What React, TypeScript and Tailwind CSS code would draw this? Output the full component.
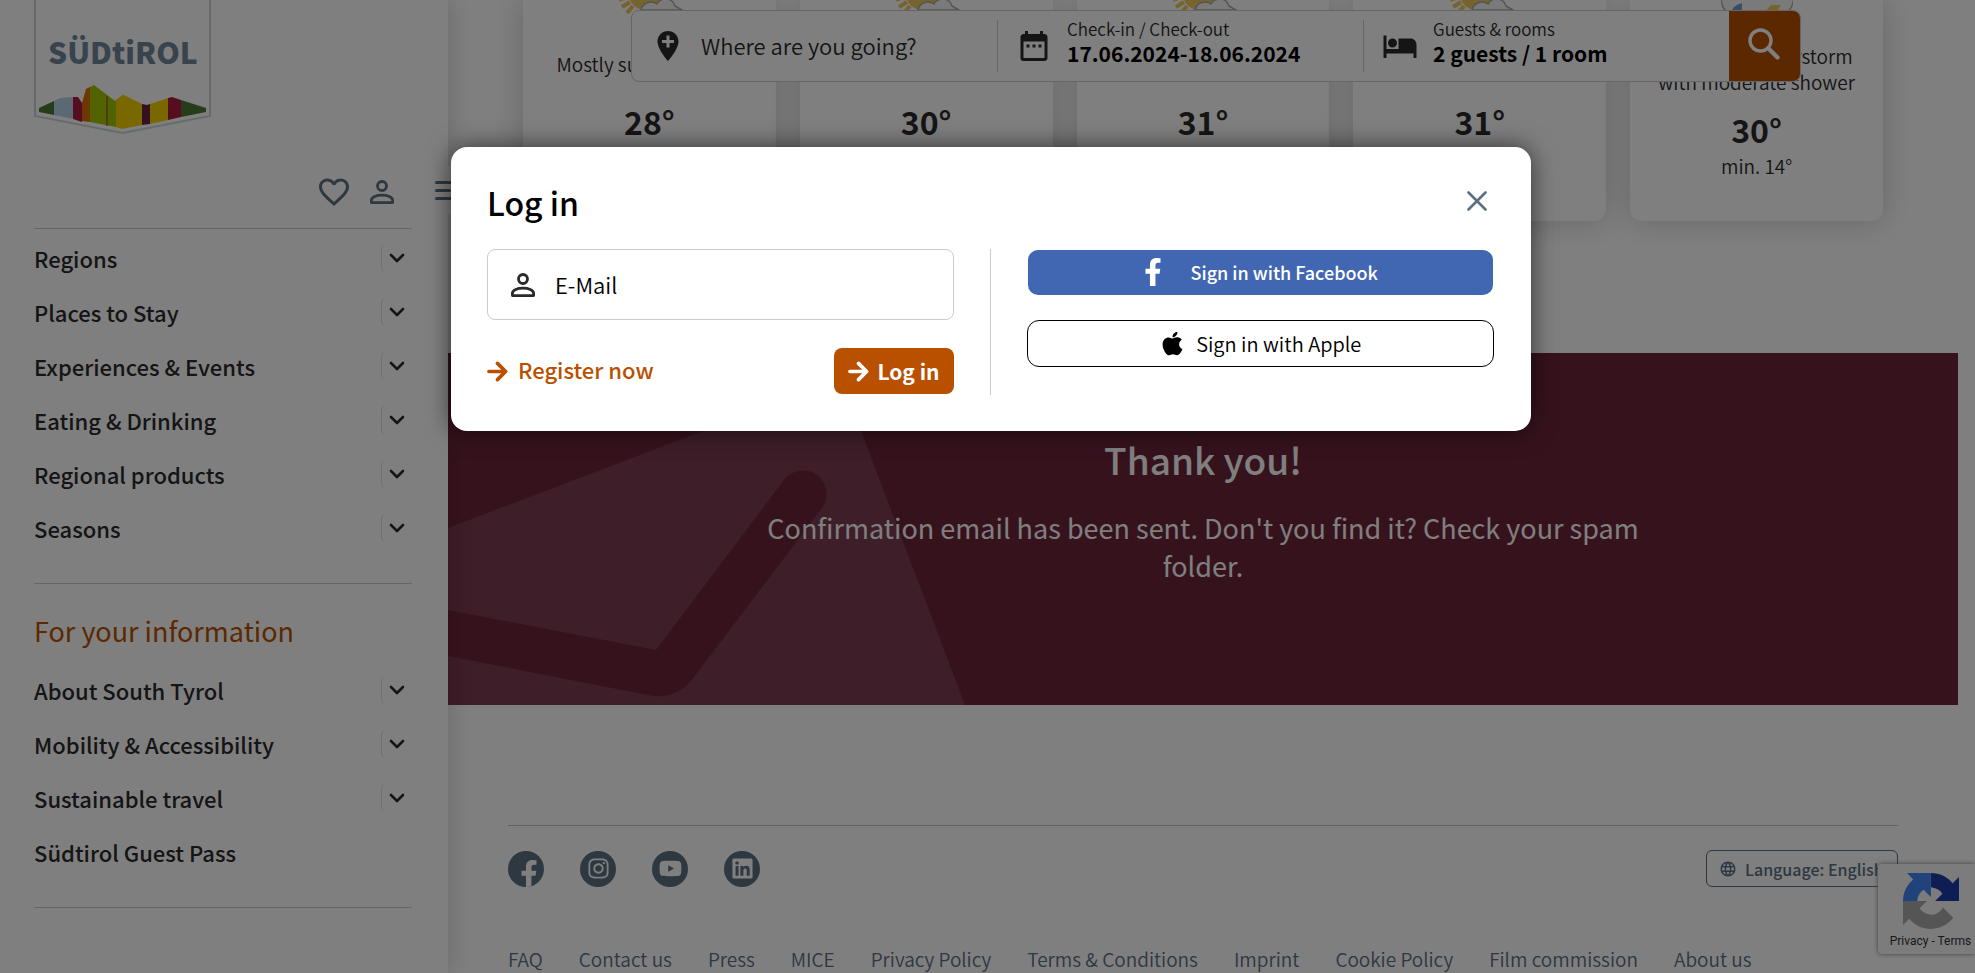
import React from "react";
import { FaApple, FaFacebookF, FaInstagram, FaLinkedin, FaYoutube } from "react-icons/fa";
import { MdAddLocation, MdDateRange, MdFavoriteBorder, MdHotel, MdLanguage } from "react-icons/md";

function PersonIcon({ className }: { className: string }) {
  return (
    <svg viewBox="0 0 24 24" fill="none" stroke="currentColor" strokeWidth="2.800" className={className} aria-hidden="true">
      <circle cx="12" cy="6" r="4.500" />
      <path d="M1.400 22.600v-2.400c0-3.200 5.200-5 10.600-5s10.600 1.800 10.600 5v2.400z" strokeLinejoin="round" />
    </svg>
  );
}

function ArrowIcon({ className }: { className: string }) {
  return (
    <svg viewBox="0 0 22 22" fill="none" stroke="currentColor" strokeWidth="3.800" strokeLinecap="round" strokeLinejoin="round" className={className} aria-hidden="true">
      <path d="M2 11H19M11 2.500l8.500 8.500-8.500 8.500" />
    </svg>
  );
}

function Logo() {
  return (
    <svg width="177" height="135" viewBox="34 0 177 135" role="img" aria-label="Südtirol" className="block">
      <path d="M35 -2V116L122.500 133L210 116V-2" fill="#fff" stroke="#cbd6d8" strokeWidth="2" />
      <text x="48" y="64" textAnchor="start" className="fill-[#73879a] font-['Noto_Sans_CJK_SC',sans-serif] text-[30px] font-black">
        SÜDtiROL
      </text>
      <path d="M39 108L54 101V115L39 112Z" fill="#4f7a34" />
      <path d="M54 101L60 98L73 97V119L54 115Z" fill="#b4d2e8" />
      <path d="M73 97H78L82 103V122L73 119Z" fill="#ab1a40" />
      <path d="M82 103L86 89L90 87V122L82 121Z" fill="#dc6c00" />
      <path d="M90 87L94 85L115 101L116 100V127L90 122Z" fill="#a6c400" />
      <path d="M107 96V126" stroke="#8a3a10" strokeWidth="1" />
      <path d="M116 100L123 94.500L142 104V125L122 129L116 127Z" fill="#f2d000" />
      <path d="M142 104L147 105L150 104V124L142 125Z" fill="#6c2040" />
      <path d="M150 104L168 98V120L150 124Z" fill="#f2d000" />
      <path d="M168 98L172 97L181 100V117L168 120Z" fill="#ab1a40" />
      <path d="M181 100L206 108V112L181 117Z" fill="#4f7a34" />
    </svg>
  );
}

function NavItem({ label, expandable = true }: { label: string; expandable?: boolean }) {
  return (
    <li className="flex h-[54px] items-center justify-between">
      <a href="#" className="pb-px text-[22px] font-medium leading-[30px] text-[#2a2a2a]">
        {label}
      </a>
      {expandable && (
        <button type="button" aria-label={`Expand ${label}`} className="flex h-[30px] w-[31px] items-center justify-center rounded-md border-l border-[#ddd]">
          <svg width="16" height="10" viewBox="0 0 16 10" fill="none" stroke="#2a2a2a" strokeWidth="2.600" strokeLinecap="round" strokeLinejoin="round">
            <path d="M2 2l6 6 6-6" />
          </svg>
        </button>
      )}
    </li>
  );
}

function Sidebar() {
  return (
    <aside className="relative z-10 w-[448px] shrink-0 bg-white pl-[34px] pr-9 shadow-[0_0_24px_rgba(0,0,0,0.2)]">
      <Logo />
      <div className="flex h-[93px] items-center justify-end gap-[18px] pr-[18px] pt-5 text-[#5b7083]">
        <button type="button" aria-label="Favourites">
          <MdFavoriteBorder className="size-9" />
        </button>
        <button type="button" aria-label="Account">
          <PersonIcon className="size-6" />
        </button>
      </div>
      <button type="button" aria-label="Menu" className="absolute left-[426px] top-[166px] flex h-12 w-12 flex-col justify-center gap-1 rounded-r-lg bg-white pl-[9px]">
        <span className="h-[3px] w-6 rounded bg-[#5b7083]" />
        <span className="mt-px h-[3px] w-4 rounded bg-[#5b7083]" />
        <span className="mt-px h-[3px] w-6 rounded bg-[#5b7083]" />
      </button>
      <nav aria-label="Main" className="border-b border-t border-[#ccc] pb-7 pt-0.5">
        <ul>
          <NavItem label="Regions" />
          <NavItem label="Places to Stay" />
          <NavItem label="Experiences & Events" />
          <NavItem label="Eating & Drinking" />
          <NavItem label="Regional products" />
          <NavItem label="Seasons" />
        </ul>
      </nav>
      <nav aria-label="Information" className="border-b border-[#ccc] pb-7 pt-[27px]">
        <h2 className="mb-3 text-[27px] leading-10 text-[#b85000]">For your information</h2>
        <ul>
          <NavItem label="About South Tyrol" />
          <NavItem label="Mobility & Accessibility" />
          <NavItem label="Sustainable travel" />
          <NavItem label="Südtirol Guest Pass" expandable={false} />
        </ul>
      </nav>
    </aside>
  );
}

function SunCloud() {
  return (
    <svg width="72" height="40" viewBox="0 0 72 40" className="-mt-6" aria-hidden="true">
      <g stroke="#ecc95c" strokeWidth="4">
        <path d="M6 24l8-3M9 31l8-5M14 37l6-7" />
      </g>
      <circle cx="32" cy="18" r="16" fill="#ecc95c" />
      <path d="M28 34c2-8 11-10 16-6 3-6 15-8 18 2l7 4z" fill="#f5f5f5" stroke="#aaa" strokeWidth="1.500" />
    </svg>
  );
}

function StormCloud() {
  return (
    <svg width="72" height="40" viewBox="0 0 72 40" className="-mt-6" aria-hidden="true">
      <path d="M2 12C-2 24 0 32 8 38H64C73 32 74 22 70 12z" fill="#f5f5f5" stroke="#aaa" strokeWidth="1.500" />
      <path d="M10 38q0-8 11-11v11z" fill="#6d9fd0" />
      <path d="M50 29h10l-6 9H42z" fill="#ecc95c" />
    </svg>
  );
}

type Weather = { text: string; temp: string; min: string; storm?: boolean };

const forecast: Weather[] = [
  { text: "Mostly sunny and dry", temp: "28°", min: "min. 14°" },
  { text: "Mostly sunny", temp: "30°", min: "min. 15°" },
  { text: "Mostly sunny", temp: "31°", min: "min. 15°" },
  { text: "Cloudy", temp: "31°", min: "min. 16°" },
  { text: "Cloudy, thunderstorm with moderate shower", temp: "30°", min: "min. 14°", storm: true },
];

function WeatherCards() {
  return (
    <section aria-label="Weather" className="grid h-[221px] grid-cols-5 gap-6 px-[75px]">
      {forecast.map((day, i) => (
        <article key={i} className="flex flex-col items-center rounded-b-xl bg-white text-center font-[350] text-[#2a2a2a] shadow-[0_0_32px_rgba(0,0,0,0.2)]">
          {day.storm ? <StormCloud /> : <SunCloud />}
          <p className={day.storm ? "mt-[27px] w-[210px] text-[19px] leading-[26px]" : "mt-[35px] text-[19px] leading-[26px]"}>{day.text}</p>
          <p className={day.storm ? "mt-2.5 text-[32px] font-bold leading-[48px]" : "mt-5 text-[32px] font-bold leading-[48px]"}>{day.temp}</p>
          <p className="text-[19px] leading-[26px]">{day.min}</p>
        </article>
      ))}
    </section>
  );
}

function SearchBar() {
  return (
    <form className="absolute left-[183px] right-[174px] top-[10px] z-10 flex h-[72px] rounded-lg border border-[#ccc] bg-white">
      <label className="my-[9px] flex flex-1 items-center gap-[15px] border-r border-[#ccc] pl-[18px]">
        <MdAddLocation className="size-9 shrink-0 text-[#2a2a2a]" />
        <input
          type="text"
          aria-label="Destination"
          placeholder="Where are you going?"
          className="h-9 w-full min-w-0 bg-transparent pb-0.5 text-[22px] font-[350] leading-9 outline-none placeholder:text-[#2a2a2a] placeholder:opacity-100"
        />
      </label>
      <button type="button" className="my-[9px] flex flex-1 items-center gap-[15px] border-r border-[#ccc] pl-[18px] text-left">
        <MdDateRange className="size-9 shrink-0 text-[#2a2a2a]" />
        <span className="-mt-2.5 flex flex-col">
          <span className="text-[17px] font-[350] leading-6 text-[#2a2a2a]">Check-in / Check-out</span>
          <span className="text-[21px] font-bold leading-[25px] text-black">17.06.2024-18.06.2024</span>
        </span>
      </button>
      <button type="button" className="my-[9px] flex flex-1 items-center gap-[15px] pl-[18px] text-left">
        <MdHotel className="size-9 shrink-0 text-[#2a2a2a]" />
        <span className="-mt-2.5 flex flex-col">
          <span className="text-[17px] font-[350] leading-6 text-[#2a2a2a]">Guests &amp; rooms</span>
          <span className="text-[21px] font-bold leading-[25px] text-black">2 guests / 1 room</span>
        </span>
      </button>
      <button type="submit" aria-label="Search" className="flex w-[71px] shrink-0 items-center justify-center rounded-r-[7px] bg-[#b85000] pb-1 pr-0.5">
        <svg width="32" height="32" viewBox="0 0 32 32" fill="none" stroke="#fff" strokeLinecap="round">
          <circle cx="12.500" cy="12.500" r="10.500" strokeWidth="3.400" />
          <path d="M21 21l8.500 8.500" strokeWidth="4.200" />
        </svg>
      </button>
    </form>
  );
}

function Newsletter() {
  return (
    <section className="relative mt-[132px] h-[352px] overflow-hidden bg-[#6d253b] text-center text-white">
      <svg width="520" height="352" viewBox="0 0 520 352" className="absolute left-0 top-0" aria-hidden="true">
        <path d="M0 175L255 78L395 20L413 78L517 352H0Z" fill="#7c3c50" />
        <path d="M0 257L208 297L336 127A23 23 0 0 1 374 155L249 320Q232 346 205 343L0 303Z" fill="#6d253b" />
      </svg>
      <div className="relative mx-auto flex max-w-[900px] flex-col gap-6 pt-20">
        <h2 className="text-[37px] font-medium leading-[52px]">Thank you!</h2>
        <p className="text-[27px] leading-[38px]">Confirmation email has been sent. Don't you find it? Check your spam folder.</p>
      </div>
    </section>
  );
}

const footerLinks = ["FAQ", "Contact us", "Press", "MICE", "Privacy Policy", "Terms & Conditions", "Imprint", "Cookie Policy", "Film commission", "About us"];

function Footer() {
  return (
    <footer className="mx-[60px] mt-[120px] border-t border-[#bfc2c4] text-[#5b7083]">
      <div className="flex items-center justify-between pt-6">
        <div className="flex gap-9">
          <a href="#" aria-label="Facebook" className="flex size-9 items-end justify-center overflow-hidden rounded-full bg-[#5b7083] pl-1.5 text-white">
            <FaFacebookF className="-mb-px size-7" />
          </a>
          <a href="#" aria-label="Instagram" className="flex size-9 items-center justify-center rounded-full bg-[#5b7083] text-white">
            <FaInstagram className="size-[23px]" />
          </a>
          <a href="#" aria-label="YouTube" className="flex size-9 items-center justify-center rounded-full bg-[#5b7083] text-white">
            <FaYoutube className="size-[23px]" />
          </a>
          <a href="#" aria-label="LinkedIn" className="flex size-9 items-center justify-center rounded-full bg-[#5b7083] text-white">
            <FaLinkedin className="size-[23px]" />
          </a>
        </div>
        <button type="button" className="flex h-[37px] w-48 items-center gap-2 rounded-md border border-[#5b7083] pl-3 text-[16px] font-medium leading-6">
          <MdLanguage className="size-[18px] shrink-0" />
          <span className="whitespace-nowrap">Language: English</span>
        </button>
      </div>
      <ul className="mt-[60px] flex gap-9 whitespace-nowrap text-[19px] font-[350] leading-6">
        {footerLinks.map((link) => (
          <li key={link}>
            <a href="#">{link}</a>
          </li>
        ))}
      </ul>
    </footer>
  );
}

function Recaptcha() {
  return (
    <div className="absolute bottom-[19px] right-0 z-10 flex h-[90px] w-[97px] flex-col items-center rounded-l-sm bg-[#f9f9f9] pl-2 pt-[9px] shadow-[0_0_5px_gray]">
      <svg width="56" height="56" viewBox="0 0 64 64" aria-label="reCAPTCHA" role="img">
        <path fill="#1c3aa9" d="M64 31.955l-.033-1.370V4.687l-7.160 7.160C50.948 4.674 42.033.093 32.050.093v16.260c.485 0 .860.057 1.135.163 4.976.393 9.288 3.140 11.828 7.124l-8.307 8.307L64 31.953" />
        <path fill="#4285f4" d="M31.862.094l-1.370.033H4.594l7.160 7.160C4.580 13.147 0 22.060 0 32.046h16.260c0-.485.057-.860.163-1.135.393-4.976 3.140-9.288 7.124-11.828l8.307 8.307L31.860.095" />
        <path fill="#ababab" d="M.001 32.045l.033 1.370v25.898l7.160-7.160c5.860 7.173 14.774 11.754 24.760 11.754 10.400 0 19.622-4.960 25.458-12.640l-11.736-11.860a15.550 15.550 0 0 1-4.754 5.334c-2.050 1.600-4.952 2.906-8.968 2.906-.485 0-.860-.057-1.135-.163-4.976-.393-9.288-3.140-11.828-7.124l8.307-8.307c-10.522.040-22.400.066-27.295-.005" />
      </svg>
      <p className="mt-1 whitespace-nowrap font-['Roboto',sans-serif] text-[12px] leading-4 text-[#333]">
        <a href="#">Privacy</a> - <a href="#">Terms</a>
      </p>
    </div>
  );
}

function LoginDialog() {
  return (
    <div className="absolute inset-0 z-20 flex items-start justify-center bg-black/50 pl-[7px] pt-[147px]">
      <div role="dialog" aria-labelledby="login-title" className="w-full max-w-[1080px] rounded-2xl bg-white pb-9 pl-9 pr-[37px] pt-[31px] shadow-[0_0_24px_rgba(0,0,0,0.6)]">
        <div className="mb-[23px] flex items-center justify-between pr-[7px]">
          <h1 id="login-title" className="text-[32px] font-medium leading-[48px] text-black">
            Log in
          </h1>
          <button type="button" aria-label="Close">
            <svg width="20" height="20" viewBox="0 0 20 20" fill="none" stroke="#5b7083" strokeWidth="2.600" strokeLinecap="round" className="mb-0.5">
              <path d="M1.500 1.500l17 17M18.500 1.500l-17 17" />
            </svg>
          </button>
        </div>
        <div className="grid grid-cols-2">
          <form className="border-r border-[#ccc] pr-9">
            <label className="flex h-[71px] items-center gap-5 rounded-lg border border-[#ccc] px-[23px]">
              <PersonIcon className="size-6 shrink-0 text-[#2a2a2a]" />
              <input
                type="email"
                aria-label="E-Mail"
                placeholder="E-Mail"
                className="h-9 w-full min-w-0 pb-0.5 text-[22px] font-[350] leading-9 outline-none placeholder:text-black placeholder:opacity-100"
              />
            </label>
            <div className="mb-px mt-7 flex h-[46px] items-center justify-between">
              <a href="#" className="flex items-center gap-2.5 pb-1 text-[22px] font-medium leading-8 text-[#b85000]">
                <ArrowIcon className="mt-1 size-[21px]" />
                Register now
              </a>
              <button type="submit" className="flex h-[46px] items-center gap-2 rounded-lg bg-[#b85000] px-[14px] text-[21px] font-bold leading-8 text-white">
                <ArrowIcon className="size-[21px]" />
                Log in
              </button>
            </div>
          </form>
          <div className="flex flex-col gap-[25px] pl-9">
            <button type="button" className="mx-px mt-px flex h-[45px] items-center justify-center gap-6 rounded-[10px] bg-[#4267b2] pb-0.5 pr-1 text-[18px] font-medium leading-6 text-white">
              <FaFacebookF className="h-7 w-7" />
              Sign in with Facebook
            </button>
            <button type="button" className="flex h-[47px] items-center justify-center gap-2.5 rounded-xl border border-black text-[20px] font-[350] leading-6 text-black">
              <FaApple className="size-[27px]" />
              Sign in with Apple
            </button>
          </div>
        </div>
      </div>
    </div>
  );
}

export default function App() {
  return (
    <div className="relative flex h-screen overflow-hidden bg-white font-['Noto_Sans_CJK_SC',sans-serif]">
      <Sidebar />
      <main className="relative min-w-0 flex-1 pr-[17px]">
        <WeatherCards />
        <SearchBar />
        <Newsletter />
        <Footer />
      </main>
      <Recaptcha />
      <LoginDialog />
    </div>
  );
}
